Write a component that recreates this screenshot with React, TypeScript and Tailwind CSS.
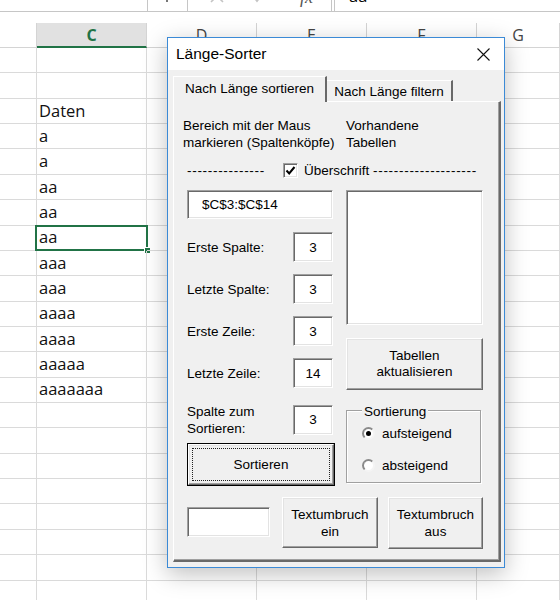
import React from 'react'

// =========================
// DATA
// =========================

const cellValues = [
  '', '', 'Daten', 'a', 'a', 'aa', 'aa', 'aa', 'aaa', 'aaa', 'aaaa', 'aaaa',
  'aaaaa', 'aaaaaaa', '', '', '', '', '', '', '', '',
]

const selectedRow = 7

const columns = [
  { key: 'B', width: 'w-[37px]' },
  { key: 'C', width: 'w-[110px]' },
  { key: 'D', width: 'w-[110px]' },
  { key: 'E', width: 'w-[110px]' },
  { key: 'F', width: 'w-[110px]' },
  { key: 'G', width: 'flex-1' },
]

const sunken =
  'bg-white border border-t-[#a0a0a0] border-l-[#a0a0a0] border-b-white border-r-white shadow-[inset_1px_1px_0_#696969,inset_-1px_-1px_0_#e3e3e3]'

const raised =
  'bg-[#f0f0f0] border border-t-white border-l-white border-b-[#696969] border-r-[#696969] shadow-[inset_-1px_-1px_0_#a0a0a0,inset_1px_1px_0_#e3e3e3]'

// =========================
// SMALL PARTS
// =========================

function FieldRow({ label, value, gap }: { label: React.ReactNode; value: string; gap: string }) {
  return (
    <div className={`grid grid-cols-[106px_40px] items-center h-[30px] ${gap}`}>
      <div className="leading-[17px] whitespace-nowrap">{label}</div>
      <div className={`${sunken} h-[30px] flex items-center justify-center`}>
        {value}
      </div>
    </div>
  )
}

function Radio({ label, checked }: { label: string; checked?: boolean }) {
  return (
    <div className="flex items-center h-[17px]">
      <div className="w-[13px] h-[13px] rounded-full bg-white border-2 border-t-[#8a8a8a] border-l-[#8a8a8a] border-b-[#f4f4f4] border-r-[#f4f4f4] flex items-center justify-center">
        {checked && <div className="w-[5px] h-[5px] rounded-full bg-black" />}
      </div>
      <span className="ml-[7px]">{label}</span>
    </div>
  )
}

// =========================
// APP
// =========================

export default function App() {
  return (
    <div className="relative w-[560px] h-[600px] overflow-hidden bg-white font-['Open_Sans',sans-serif]">

      {/* FORMULA BAR (only the bottom edge is visible) */}

      <div className="flex h-[12px] overflow-hidden">
        <div className="w-[148px] h-full border-b border-r border-[#c6c6c6]" />
        <div className="w-[39px] h-full border-b border-[#c6c6c6] pl-[18px]">
          <div className="w-[2px] h-[2px] bg-[#777]" />
        </div>
        <div className="w-[145px] h-full border-l border-b border-r border-[#c6c6c6] flex items-end gap-[28px] pl-[22px]">
          <svg width="14" height="14" viewBox="0 0 14 14" className="mb-[8px]">
            <path d="M1 1 L13 13 M13 1 L1 13" stroke="#c4c4c4" strokeWidth="1.6" />
          </svg>
          <svg width="14" height="14" viewBox="0 0 14 14" className="mb-[8px]">
            <path d="M1 7 L5 12 L13 2" stroke="#c4c4c4" strokeWidth="1.8" fill="none" />
          </svg>
          <span className="mb-[5px] ml-[6px] italic font-['Liberation_Serif',serif] text-[18px] leading-[18px] text-[#555]">
            fx
          </span>
        </div>
        <div className="w-[2px] h-full border-b border-[#c6c6c6]" />
        <div className="flex-1 h-full border-l border-b border-[#c6c6c6] pl-[14px] flex items-end">
          <span className="text-[16.5px] leading-[16px] mb-[7px]">aa</span>
        </div>
      </div>

      {/* COLUMN HEADERS */}

      <div className="flex h-[25px] mt-[11px] text-[16px] text-[#444]">
        {columns.map((col) => (
          <div
            key={col.key}
            className={
              col.key === 'C'
                ? `${col.width} h-full flex items-center justify-center border-r border-r-[#d4d4d4] border-b-2 border-b-[#217346] bg-[#e1e1e1] text-[#217346] font-bold`
                : `${col.width} h-full flex items-center justify-center border-r border-r-[#d4d4d4] border-b border-b-[#d4d4d4]`
            }
          >
            {col.key === 'B' ? '' : col.key}
          </div>
        ))}
      </div>

      {/* ROWS */}

      {cellValues.map((value, i) => (
        <div key={i} className="flex h-[25.36px]">
          {columns.map((col) => (
            <div
              key={col.key}
              className={`${col.width} relative h-full border-r border-b border-[#dadada] flex items-center pl-[2px] text-[16.5px] text-[#111]`}
            >
              {col.key === 'C' && value}
              {col.key === 'C' && i === selectedRow && (
                <div className="absolute left-[-2px] top-[-1px] right-[-2px] bottom-[-1px] border-2 border-[#217346]">
                  <div className="absolute right-[-5px] bottom-[-5px] w-[7px] h-[7px] bg-[#217346] border border-white" />
                </div>
              )}
            </div>
          ))}
        </div>
      ))}

      {/* DIALOG (floating window) */}

      <div className="absolute left-[167px] top-[37px] w-[338px] h-[531px] border border-[#3b8ad6] flex flex-col shadow-[0_6px_22px_rgba(0,0,0,0.25)] font-['Liberation_Sans',Arial,sans-serif] text-black">

        {/* TITLE */}

        <div className="h-[32px] bg-white flex items-center justify-between pl-[8px] pr-[14px]">
          <span className="text-[15.5px]">Länge-Sorter</span>
          <svg width="13" height="13" viewBox="0 0 13 13">
            <path d="M0.5 0.5 L12.5 12.5 M12.5 0.5 L0.5 12.5" stroke="#111" strokeWidth="1.1" />
          </svg>
        </div>

        {/* CLIENT */}

        <div className="flex-1 bg-[#f0f0f0] pl-[5px] pt-[6px] text-[13.5px]">

          {/* TABS */}

          <div className="flex items-end h-[25px]">
            <div className="relative z-10 w-[154px] h-[26px] -mb-[1px] bg-[#f0f0f0] border-t border-l border-t-white border-l-white border-r-2 border-r-[#696969] flex items-center justify-center">
              Nach Länge sortieren
            </div>
            <div className="w-[126px] h-[21px] border-t border-t-white border-r-2 border-r-[#696969] flex items-center justify-center pt-[2px]">
              Nach Länge filtern
            </div>
          </div>

          {/* PAGE */}

          <div className="w-[328px] h-[461px] border-t border-l border-t-white border-l-white border-r-2 border-b-2 border-r-[#696969] border-b-[#696969] shadow-[inset_-1px_-1px_0_#a0a0a0] pl-[13px] pt-[15px] leading-[17px]">

            <div className="grid grid-cols-[159px_137px]">
              <div className="-ml-[4px] whitespace-nowrap">
                Bereich mit der Maus<br />markieren (Spaltenköpfe)
              </div>
              <div>
                Vorhandene<br />Tabellen
              </div>
            </div>

            <div className="mt-[12px] h-[15px] flex items-center whitespace-nowrap">
              <span className="w-[96px] tracking-[0.7px]">---------------</span>
              <div className={`${sunken} w-[15px] h-[15px] flex items-center justify-center`}>
                <svg width="11" height="11" viewBox="0 0 11 11">
                  <path d="M1.5 5.5 L4.2 8.5 L9.5 2" stroke="#000" strokeWidth="2" fill="none" />
                </svg>
              </div>
              <span className="ml-[6px]">
                Überschrift <span className="tracking-[0.7px]">--------------------</span>
              </span>
            </div>

            <div className="mt-[12px] grid grid-cols-[159px_137px]">

              {/* LEFT */}

              <div className="flex flex-col">
                <div className={`${sunken} w-[146px] h-[29px] flex items-center pl-[14px]`}>
                  $C$3:$C$14
                </div>
                <FieldRow label="Erste Spalte:" value="3" gap="mt-[13px]" />
                <FieldRow label="Letzte Spalte:" value="3" gap="mt-[12px]" />
                <FieldRow label="Erste Zeile:" value="3" gap="mt-[12px]" />
                <FieldRow label="Letzte Zeile:" value="14" gap="mt-[12px]" />
                <FieldRow
                  label={<div className="mt-[1px]">Spalte zum<br />Sortieren:</div>}
                  value="3"
                  gap="mt-[14px]"
                />
                <div className="mt-[11px] w-[148px] h-[43px] border border-black">
                  <div className={`${raised} h-full p-[3px]`}>
                    <div className="h-full border border-dotted border-[#222] flex items-center justify-center">
                      Sortieren
                    </div>
                  </div>
                </div>
              </div>

              {/* RIGHT */}

              <div className="flex flex-col">
                <div className={`${sunken} w-[137px] h-[135px]`} />
                <div className={`${raised} mt-[13px] w-[137px] h-[52px] flex flex-col items-center justify-center leading-[16px]`}>
                  <span>Tabellen</span>
                  <span>aktualisieren</span>
                </div>
                <div className="relative mt-[20px] w-[135px] h-[73px] border border-[#a0a0a0] shadow-[inset_1px_1px_0_#fff,1px_1px_0_#fff] pl-[15px] pt-[14px] flex flex-col gap-[15px]">
                  <span className="absolute left-[15px] top-[-8px] px-[2px] bg-[#f0f0f0]">Sortierung</span>
                  <Radio label="aufsteigend" checked />
                  <Radio label="absteigend" />
                </div>
              </div>
            </div>

            {/* BOTTOM ROW */}

            <div className="mt-[11px] flex items-start">
              <div className={`${sunken} mt-[10px] w-[83px] h-[30px]`} />
              <div className={`${raised} ml-[12px] w-[96px] h-[51px] flex flex-col items-center justify-center`}>
                <span>Textumbruch</span>
                <span>ein</span>
              </div>
              <div className={`${raised} ml-[10px] w-[95px] h-[52px] flex flex-col items-center justify-center`}>
                <span>Textumbruch</span>
                <span>aus</span>
              </div>
            </div>

          </div>
        </div>
      </div>
    </div>
  )
}
